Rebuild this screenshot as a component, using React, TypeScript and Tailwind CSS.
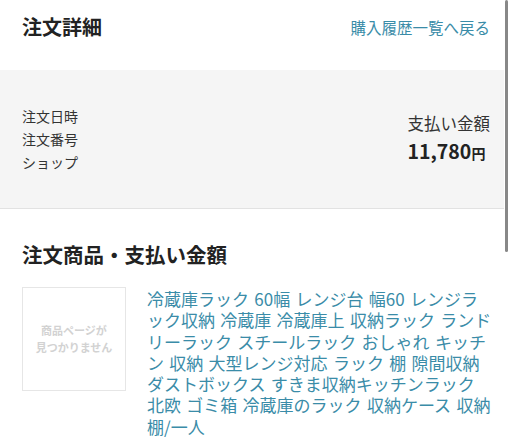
import React from 'react';

const font = { fontFamily: '"Noto Sans CJK JP", "Noto Sans", sans-serif' };

// 商品名（参照画像と同じ位置で改行）
const productName = [
  '冷蔵庫ラック 60幅 レンジ台 幅60 レンジラ',
  'ック収納 冷蔵庫 冷蔵庫上 収納ラック ランド',
  'リーラック スチールラック おしゃれ キッチ',
  'ン 収納 大型レンジ対応 ラック 棚 隙間収納',
  'ダストボックス すきま収納キッチンラック',
  '北欧 ゴミ箱 冷蔵庫のラック 収納ケース 収納',
  '棚/一人',
].join('\n');

const App = () => {
  return (
    <div className="relative h-[438px] w-[512px] overflow-hidden bg-white text-[#222]" style={font}>
      {/* scrollbar */}
      <div className="absolute right-[4px] top-0 h-[252px] w-[3px] rounded-full bg-[#888]"></div>

      <div className="w-[504px]">
        {/* ヘッダー */}
        <div className="flex h-[70px] items-start justify-between pl-[22px] pr-[14px] pt-[12px]">
          <div className="text-[20px] font-bold leading-[30px]">注文詳細</div>
          <div className="pt-[4px] text-[15.5px] leading-[22px] text-[#3a8ca8]">購入履歴一覧へ戻る</div>
        </div>

        {/* 注文情報 */}
        <div className="flex h-[139px] items-center justify-between border-b border-[#e2e2e2] bg-[#f5f5f5] pl-[22px] pr-[14px]">
          <div className="flex flex-col text-[14px] leading-[23px] text-[#333]">
            <div>注文日時</div>
            <div>注文番号</div>
            <div>ショップ</div>
          </div>
          <div className="flex flex-col">
            <div className="text-[16.5px] leading-[26px] text-[#333]">支払い金額</div>
            <div className="font-bold leading-[30px] text-[#222]">
              <span className="text-[19.5px]">11,780</span>
              <span className="text-[14px]">円</span>
            </div>
          </div>
        </div>

        {/* 注文商品 */}
        <div className="pl-[22px] pr-[8px] pt-[30px]">
          <div className="text-[20.5px] font-bold leading-[30px]">注文商品・支払い金額</div>
          <div className="mt-[18px] flex gap-[21px]">
            <div className="flex h-[104px] w-[104px] shrink-0 items-center justify-center border border-[#e6e6e6] pb-[1px] text-center text-[11px] font-bold leading-[17px] text-[#d2d2d2]">
              商品ページが
              <br />
              見つかりません
            </div>
            <p className="mt-[1px] flex-1 whitespace-pre text-[17px] leading-[21.3px] text-[#3a8ca8] [word-spacing:1.5px]">
              {productName}
            </p>
          </div>
        </div>
      </div>
    </div>
  );
};

export default App;
